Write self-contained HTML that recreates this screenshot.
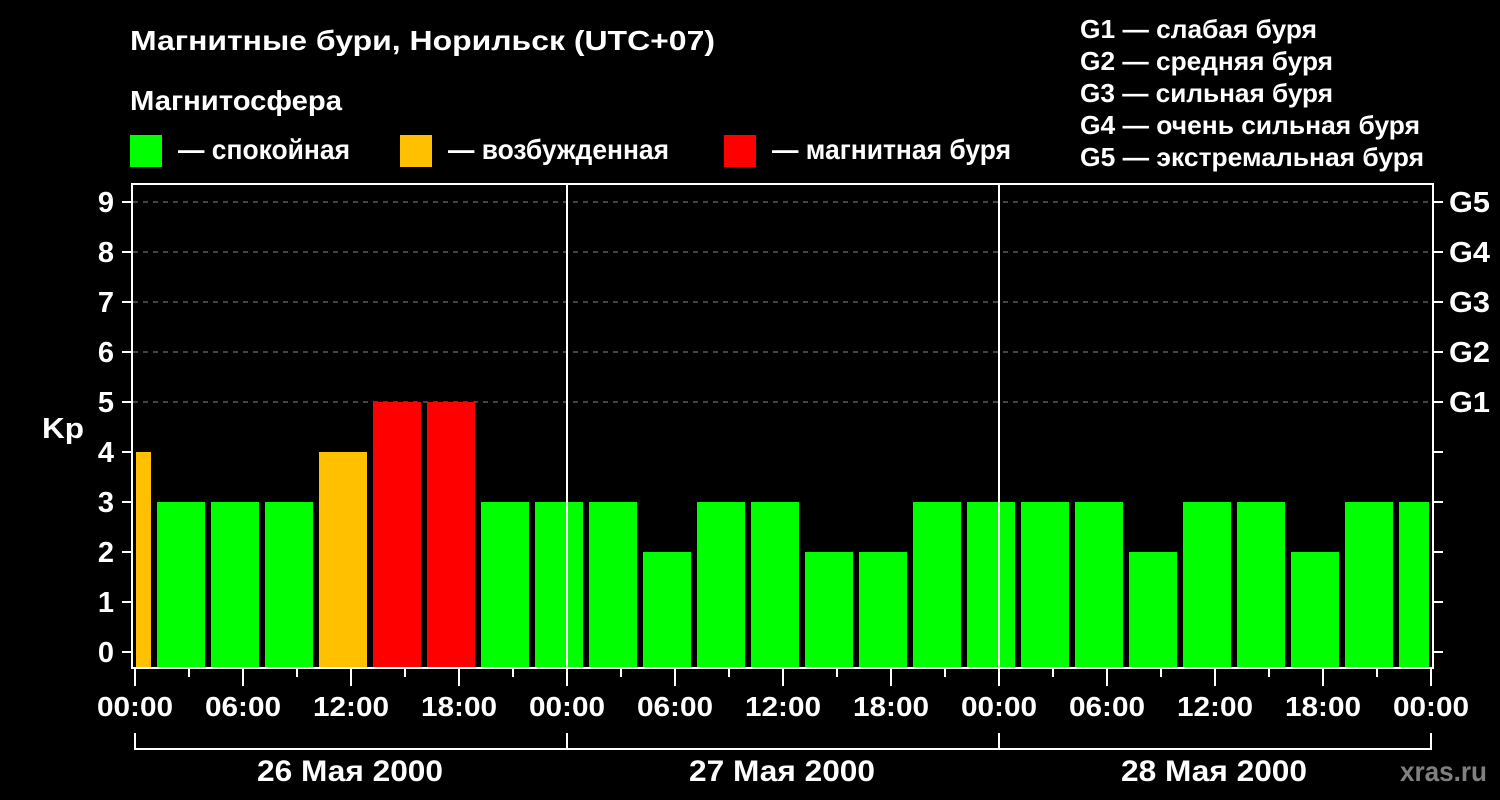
<!DOCTYPE html>
<html><head><meta charset="utf-8"><style>html,body{margin:0;padding:0;background:#000;width:1500px;height:800px;overflow:hidden}</style></head>
<body>
<svg width="1500" height="800" xmlns="http://www.w3.org/2000/svg" font-family="Liberation Sans, Arial, sans-serif" font-weight="bold" fill="#fff">
<rect width="1500" height="800" fill="#000"/>
<text x="130" y="50" font-size="28" textLength="585" lengthAdjust="spacingAndGlyphs">Магнитные бури, Норильск (UTC+07)</text>
<text x="130" y="110" font-size="28" textLength="212" lengthAdjust="spacingAndGlyphs">Магнитосфера</text>
<rect x="130" y="135" width="32" height="32" fill="#00ff00"/>
<text x="178" y="159" font-size="28" textLength="172" lengthAdjust="spacingAndGlyphs">— спокойная</text>
<rect x="400" y="135" width="32" height="32" fill="#ffc000"/>
<text x="448" y="159" font-size="28" textLength="221" lengthAdjust="spacingAndGlyphs">— возбужденная</text>
<rect x="724" y="135" width="32" height="32" fill="#ff0000"/>
<text x="772" y="159" font-size="28" textLength="239" lengthAdjust="spacingAndGlyphs">— магнитная буря</text>
<g font-size="26">
<text x="1080" y="38" textLength="237" lengthAdjust="spacingAndGlyphs">G1 — слабая буря</text>
<text x="1080" y="70" textLength="253" lengthAdjust="spacingAndGlyphs">G2 — средняя буря</text>
<text x="1080" y="102" textLength="253" lengthAdjust="spacingAndGlyphs">G3 — сильная буря</text>
<text x="1080" y="134" textLength="340" lengthAdjust="spacingAndGlyphs">G4 — очень сильная буря</text>
<text x="1080" y="166" textLength="344" lengthAdjust="spacingAndGlyphs">G5 — экстремальная буря</text>
</g>
<g stroke="#888" stroke-width="1" stroke-dasharray="5,5">
<line x1="133" y1="202" x2="1432" y2="202"/><line x1="133" y1="252" x2="1432" y2="252"/><line x1="133" y1="302" x2="1432" y2="302"/><line x1="133" y1="352" x2="1432" y2="352"/><line x1="133" y1="402" x2="1432" y2="402"/>
</g>
<rect x="136" y="452" width="15" height="216" fill="#ffc000"/>
<g fill="#00ff00">
<rect x="157" y="502" width="48" height="166"/><rect x="211" y="502" width="48" height="166"/><rect x="265" y="502" width="48" height="166"/>
<rect x="481" y="502" width="48" height="166"/><rect x="535" y="502" width="48" height="166"/><rect x="589" y="502" width="48" height="166"/>
<rect x="643" y="552" width="48" height="116"/><rect x="697" y="502" width="48" height="166"/><rect x="751" y="502" width="48" height="166"/>
<rect x="805" y="552" width="48" height="116"/><rect x="859" y="552" width="48" height="116"/><rect x="913" y="502" width="48" height="166"/>
<rect x="967" y="502" width="48" height="166"/><rect x="1021" y="502" width="48" height="166"/><rect x="1075" y="502" width="48" height="166"/>
<rect x="1129" y="552" width="48" height="116"/><rect x="1183" y="502" width="48" height="166"/><rect x="1237" y="502" width="48" height="166"/>
<rect x="1291" y="552" width="48" height="116"/><rect x="1345" y="502" width="48" height="166"/><rect x="1399" y="502" width="30" height="166"/>
</g>
<rect x="319" y="452" width="48" height="216" fill="#ffc000"/>
<rect x="373" y="402" width="48" height="266" fill="#ff0000"/>
<rect x="427" y="402" width="48" height="266" fill="#ff0000"/>
<g stroke="#fff" stroke-width="2" fill="none">
<rect x="132" y="184" width="1301" height="484"/>
<line x1="567" y1="184" x2="567" y2="668"/><line x1="999" y1="184" x2="999" y2="668"/>
<path d="M122 202H132M122 252H132M122 302H132M122 352H132M122 402H132M122 452H132M122 502H132M122 552H132M122 602H132M122 652H132"/>
<path d="M1433 202H1443M1433 252H1443M1433 302H1443M1433 352H1443M1433 402H1443M1433 452H1443M1433 502H1443M1433 552H1443M1433 602H1443M1433 652H1443"/>
<path d="M135 669V686M243 669V686M351 669V686M459 669V686M567 669V686M675 669V686M783 669V686M891 669V686M999 669V686M1107 669V686M1215 669V686M1323 669V686M1431 669V686"/>
<path d="M189 669V677M297 669V677M405 669V677M513 669V677M621 669V677M729 669V677M837 669V677M945 669V677M1053 669V677M1161 669V677M1269 669V677M1377 669V677"/>
<path d="M135 733V749H1431V733M567 733V749M999 733V749"/>
</g>
<g font-size="29" text-anchor="middle">
<text x="106" y="212">9</text><text x="106" y="262">8</text><text x="106" y="312">7</text><text x="106" y="362">6</text><text x="106" y="412">5</text><text x="106" y="462">4</text><text x="106" y="512">3</text><text x="106" y="562">2</text><text x="106" y="612">1</text><text x="106" y="662">0</text>
</g>
<text x="42" y="438" font-size="29" textLength="42" lengthAdjust="spacingAndGlyphs">Kp</text>
<g font-size="29">
<text x="1449" y="212" textLength="41" lengthAdjust="spacingAndGlyphs">G5</text><text x="1449" y="262" textLength="41" lengthAdjust="spacingAndGlyphs">G4</text><text x="1449" y="312" textLength="41" lengthAdjust="spacingAndGlyphs">G3</text><text x="1449" y="362" textLength="41" lengthAdjust="spacingAndGlyphs">G2</text><text x="1449" y="412" textLength="41" lengthAdjust="spacingAndGlyphs">G1</text>
</g>
<g font-size="28" text-anchor="middle">
<text x="135" y="716" textLength="76" lengthAdjust="spacingAndGlyphs">00:00</text><text x="243" y="716" textLength="76" lengthAdjust="spacingAndGlyphs">06:00</text><text x="351" y="716" textLength="76" lengthAdjust="spacingAndGlyphs">12:00</text><text x="459" y="716" textLength="76" lengthAdjust="spacingAndGlyphs">18:00</text>
<text x="567" y="716" textLength="76" lengthAdjust="spacingAndGlyphs">00:00</text><text x="675" y="716" textLength="76" lengthAdjust="spacingAndGlyphs">06:00</text><text x="783" y="716" textLength="76" lengthAdjust="spacingAndGlyphs">12:00</text><text x="891" y="716" textLength="76" lengthAdjust="spacingAndGlyphs">18:00</text>
<text x="999" y="716" textLength="76" lengthAdjust="spacingAndGlyphs">00:00</text><text x="1107" y="716" textLength="76" lengthAdjust="spacingAndGlyphs">06:00</text><text x="1215" y="716" textLength="76" lengthAdjust="spacingAndGlyphs">12:00</text><text x="1323" y="716" textLength="76" lengthAdjust="spacingAndGlyphs">18:00</text><text x="1431" y="716" textLength="76" lengthAdjust="spacingAndGlyphs">00:00</text>
</g>
<g font-size="30" text-anchor="middle">
<text x="350" y="781" textLength="186" lengthAdjust="spacingAndGlyphs">26 Мая 2000</text><text x="782" y="781" textLength="186" lengthAdjust="spacingAndGlyphs">27 Мая 2000</text><text x="1214" y="781" textLength="186" lengthAdjust="spacingAndGlyphs">28 Мая 2000</text>
</g>
<text x="1400" y="781" font-size="28" fill="#808080" textLength="87" lengthAdjust="spacingAndGlyphs">xras.ru</text>
</svg>
</body></html>
